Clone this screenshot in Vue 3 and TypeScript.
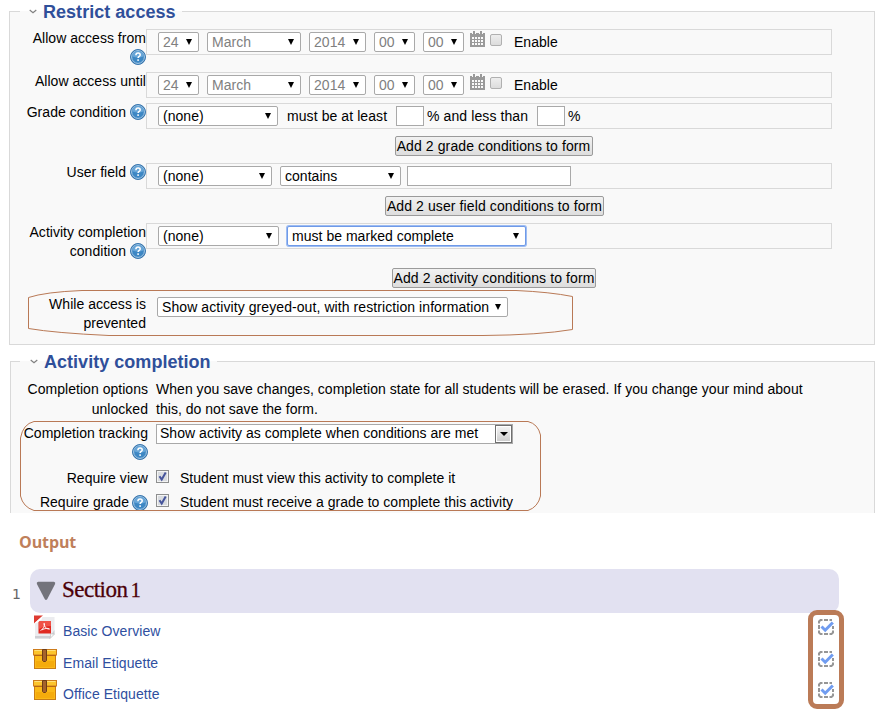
<script setup lang="ts">
import { defineComponent, h } from 'vue'

interface DateRow { label: string; help: boolean; cls: string }
interface Activity { name: string; kind: 'pdf' | 'package' }

const dateRows: DateRow[] = [
  { label: 'Allow access from', help: true, cls: 'from' },
  { label: 'Allow access until', help: false, cls: 'until' },
]
const dateParts = [
  { value: '24', cls: 'w41' },
  { value: 'March', cls: 'w94' },
  { value: '2014', cls: 'w57' },
  { value: '00', cls: 'w41' },
  { value: '00', cls: 'w41' },
]
const activities: Activity[] = [
  { name: 'Basic Overview', kind: 'pdf' },
  { name: 'Email Etiquette', kind: 'package' },
  { name: 'Office Etiquette', kind: 'package' },
]

const HelpIcon = defineComponent({
  render: () =>
    h('svg', { width: 16, height: 16, viewBox: '0 0 16 16' }, [
      h('circle', { cx: 8, cy: 8, r: 7.5, fill: '#2e6ca4', stroke: '#3a78b0', 'stroke-width': 1 }),
      h('circle', { cx: 8, cy: 8, r: 6.4, fill: '#3d87c4', stroke: '#a9cdea', 'stroke-width': 1 }),
      h('path', { d: 'M2.5 7.5a5.5 5.5 0 0 1 11 0q-5.5 2-11 0z', fill: '#68a6d8' }),
      h('path', { d: 'M5.9 6.3c0-1.5 .9-2.200 2.200-2.200s2.100.7 2.100 1.800c0 1.500-2.100 1.600-2.100 3.200', fill: 'none', stroke: '#fff', 'stroke-width': 1.5 }),
      h('rect', { x: 7.3, y: 10.3, width: 1.600, height: 1.600, fill: '#fff' }),
    ]),
})
</script>

<template>
  <main class="page">
    <fieldset class="panel restrict">
      <legend>
        <svg class="chev" width="8" height="5" viewBox="0 0 8 5"><path d="M.7 1L4 3.7 7.3 1" /></svg>
        <span>Restrict access</span>
      </legend>

      <div v-for="row in dateRows" :key="row.label" class="row" :class="row.cls">
        <div class="label"><span>{{ row.label }}</span><HelpIcon v-if="row.help" class="help" /></div>
        <div class="box">
          <span v-for="(part, i) in dateParts" :key="i" class="select dim" :class="part.cls">{{ part.value }}<i class="arrow" /></span>
          <svg class="calendar" width="15" height="16" viewBox="0 0 15 16" shape-rendering="crispEdges">
            <path fill="#999" d="M0 2h15v14H0z" />
            <path fill="#f9f9f9" d="M2 0h1v3H2zM5 0h1v3H5zM9 0h1v3H9zM12 0h1v3h-1z" />
            <path fill="#999" d="M3 0h2v3H3zM10 0h2v3h-2z" />
            <path fill="#f9f9f9" d="M2 6h2v2H2zM5 6h2v2H5zM8 6h2v2H8zM11 6h2v2h-2zM2 9h2v2H2zM5 9h2v2H5zM8 9h2v2H8zM11 9h2v2h-2zM2 12h2v2H2zM5 12h2v2H5zM8 12h2v2H8zM11 12h2v2h-2z" />
          </svg>
          <span class="tick-off" />
          <span class="enable">Enable</span>
        </div>
      </div>

      <div class="row cond">
        <div class="label"><span>Grade condition</span><HelpIcon class="help" /></div>
        <div class="box">
          <span class="select w120">(none)<i class="arrow" /></span>
          <span class="t-least">must be at least</span>
          <span class="input w28" />
          <span class="t-less">% and less than</span>
          <span class="input w28" />
          <span class="t-pct">%</span>
        </div>
      </div>
      <div class="action first"><button type="button" class="b198">Add 2 grade conditions to form</button></div>

      <div class="row cond">
        <div class="label"><span>User field</span><HelpIcon class="help" /></div>
        <div class="box">
          <span class="select w114">(none)<i class="arrow" /></span>
          <span class="select w121">contains<i class="arrow" /></span>
          <span class="input w164" />
        </div>
      </div>
      <div class="action"><button type="button" class="b219">Add 2 user field conditions to form</button></div>

      <div class="row completion">
        <div class="label"><span>Activity completion</span><span>condition <HelpIcon class="help inline" /></span></div>
        <div class="box">
          <span class="select w121">(none)<i class="arrow" /></span>
          <span class="select w239 focus">must be marked complete<i class="arrow" /></span>
        </div>
      </div>
      <div class="action last"><button type="button" class="b204">Add 2 activity conditions to form</button></div>

      <div class="row prevented">
        <div class="label"><span>While access is</span><span>prevented</span></div>
        <span class="select w351">Show activity greyed-out, with restriction information<i class="arrow" /></span>
      </div>
    </fieldset>

    <fieldset class="panel tracking">
      <legend>
        <svg class="chev" width="8" height="5" viewBox="0 0 8 5"><path d="M.7 1L4 3.7 7.3 1" /></svg>
        <span>Activity completion</span>
      </legend>
      <div class="row2 unlocked">
        <div class="label2">Completion options<br>unlocked</div>
        <p>When you save changes, completion state for all students will be erased. If you change your mind about<br>this, do not save the form.</p>
      </div>
      <div class="row2 track">
        <div class="label2"><span>Completion tracking</span><HelpIcon class="help" /></div>
        <span class="select flat">Show activity as complete when conditions are met<b class="drop"><i /></b></span>
      </div>
      <div class="row2 check">
        <div class="label2">Require view</div>
        <svg class="tick-on" width="13" height="13" viewBox="0 0 13 13"><rect x=".5" y=".5" width="12" height="12" fill="#f4f4f4" stroke="#8e8f8f" /><rect x="2" y="2" width="9" height="9" fill="#d9dce0" /><path d="M3.500 6.200l2.200 3.300 4-7" /></svg>
        <span>Student must view this activity to complete it</span>
      </div>
      <div class="row2 check">
        <div class="label2 with-help"><span>Require grade</span><HelpIcon class="help" /></div>
        <svg class="tick-on" width="13" height="13" viewBox="0 0 13 13"><rect x=".5" y=".5" width="12" height="12" fill="#f4f4f4" stroke="#8e8f8f" /><rect x="2" y="2" width="9" height="9" fill="#d9dce0" /><path d="M3.500 6.200l2.200 3.300 4-7" /></svg>
        <span>Student must receive a grade to complete this activity</span>
      </div>
    </fieldset>

    <section class="output">
      <h2>Output</h2>
      <div class="section-head">
        <span class="num">1</span>
        <div class="bar">
          <svg width="20" height="20" viewBox="0 0 20 20"><path d="M2.200 .8h15.600q2 .2 1.300 2.200L11.300 18q-1.300 2-2.600 0L.9 3Q.2 1 2.200 .8z" fill="#73737b" /></svg>
          <h3>Section <small>1</small></h3>
        </div>
      </div>
      <ul>
        <li v-for="a in activities" :key="a.name">
          <svg v-if="a.kind === 'pdf'" class="ico" width="24" height="24" viewBox="0 0 24 24">
            <path d="M2 2h19.500v17L17 23.500H2z" fill="#ececef" />
            <path d="M2 21v2.500h15L21.500 19v-4L17 21z" fill="#cfcfd4" />
            <path d="M17 23.500q1-3 .3-4.800 2 .6 4.200.3z" fill="#fafafa" stroke="#bbb" stroke-width=".6" />
            <rect x="5.500" y="6" width="12.500" height="12.500" fill="#e02a22" />
            <path d="M6 6h12v5Q11 11 6 14z" fill="#f05247" />
            <path d="M7.500 15.500c3-1.300 4.500-5 4-7-.5-1-1 .2-.3 1.800 1 2.500 3 4 5.300 3.700-1.500-1.300-5-.5-7.500.8" fill="none" stroke="#fff" stroke-width=".9" />
            <path d="M1 .5h9L1 8.500z" fill="#de3b31" />
            <path d="M1 8.500L10 .5l-1.500 4L4 8z" fill="#fff" />
          </svg>
          <svg v-else class="ico pack" width="24" height="21" viewBox="0 0 24 21">
            <rect x="1.500" y="4.500" width="21" height="15" fill="#fbb917" stroke="#c77c16" />
            <rect x="3" y="12" width="18" height="6" fill="#f5ab0c" />
            <rect x=".5" y=".5" width="23" height="5.500" fill="#fcc42c" stroke="#cd7c1c" />
            <path d="M1 6.500h22" stroke="#b96613" />
            <path d="M1.500 1.500h21" stroke="#ffe07a" />
            <path d="M9.500.5h4v11l-1 1h-2l-1-1z" fill="#a5622c" stroke="#6f3d16" />
          </svg>
          <a>{{ a.name }}</a>
          <svg class="done" width="16" height="16" viewBox="0 0 16 16">
            <path d="M1 4.500V2.500L2.500 1H4.500M6 1h4M11.500 1h2.500M15 11.500v2L13.500 15h-2M10 15H6M4.500 15H2.500L1 13.500v-2M1 6v4M15 7v3" fill="none" stroke="#969696" stroke-width="2" />
            <path d="M3.500 7.500L7.200 11.200 14.800 3.500" fill="none" stroke="#709cf0" stroke-width="3" />
          </svg>
        </li>
      </ul>
    </section>

    <svg class="marks" width="885" height="720" viewBox="0 0 885 720">
      <path d="M28.500 297.500Q45 292 82 290.500H516Q550 292 572.500 296.500V329.500Q540 335 483 335.500H109Q55 333 28.500 328.500z" />
      <path d="M34 421.500H528Q538 424 540.500 435V496Q538 507 528 510.500H34Q23 507 20.500 496V438Q23 424 34 421.500z" />
      <rect class="thick" x="810.500" y="612.500" width="31" height="94" rx="6.500" />
    </svg>
  </main>
</template>

<style>
body { margin: 0; background: #fff; }
</style>

<style scoped>
.page { position: relative; width: 885px; height: 720px; overflow: hidden; font: 14px/19px Arial, "Liberation Sans", sans-serif; letter-spacing: .03px; color: #000; background: #fff; }
.panel { box-sizing: border-box; margin: 0; border: 1px solid #d9d9d9; background: #f9f9f9; min-width: 0; }
.restrict { width: 866px; height: 345px; margin-left: 9px; padding: 6px 0 0; }
.tracking { width: 865px; height: 163px; margin: 5px 0 0 10px; padding: 6px 0 0; border-bottom: 0; }
legend { display: flex; align-items: center; box-sizing: border-box; height: 23px; margin-left: 10px; padding: 0 6px 0 9px; font-size: 18px; font-weight: bold; line-height: 23px; color: #2f4f9a; white-space: nowrap; }
legend span { padding-top: 2px; }
.tracking legend { margin-left: 9px; padding-left: 10px; }
.chev { margin-right: 6px; }
.chev path { fill: none; stroke: #808080; stroke-width: 1.200; }
.row { display: flex; align-items: flex-start; white-space: nowrap; }
.from { height: 43px; }
.until { height: 31px; }
.cond { height: 33px; }
.completion { height: 45px; }
.label { width: 136px; flex: none; display: flex; flex-direction: column; align-items: flex-end; }
.cond .label { flex-direction: row; justify-content: flex-end; align-items: flex-start; gap: 4px; }
.help { display: block; flex: none; margin-top: 1px; }
.inline { display: inline-block; margin-top: 0; vertical-align: -3px; }
.box { box-sizing: border-box; width: 686px; height: 26px; border: 1px solid #d9d9d9; display: flex; align-items: flex-start; padding: 2px 0 0 11px; line-height: 20px; }
.select { box-sizing: border-box; flex: none; height: 20px; display: flex; align-items: center; justify-content: space-between; border: 1px solid #a9a9a9; border-radius: 2px; background: #fff; padding: 0 6px 0 4px; line-height: 18px; white-space: nowrap; }
.select + .select { margin-left: 8px; }
.dim { color: #808080; }
.arrow { width: 0; height: 0; border: 3.500px solid transparent; border-top: 6px solid #000; border-bottom: 0; }
.focus { border-color: #6f9ae8; box-shadow: 0 0 0 1px #9dbcf2; }
.w41 { width: 41px; }
.w57 { width: 57px; }
.w94 { width: 94px; }
.w114 { width: 114px; }
.w120 { width: 120px; }
.w121 { width: 121px; }
.w239 { width: 239px; }
.w351 { width: 351px; margin-left: 11px; letter-spacing: .08px; }
.calendar { margin: -1px 0 0 6px; }
.tick-off { box-sizing: border-box; width: 12px; height: 12px; margin: 2px 12px 0 5px; border: 1px solid #b0b0b0; border-radius: 2px; background: linear-gradient(#eee, #dcdcdc); }
.input { box-sizing: border-box; height: 20px; border: 1px solid #a9a9a9; background: #fff; }
.w28 { width: 28px; }
.w164 { width: 164px; margin-left: 6px; }
.t-least { width: 109px; margin-left: 9px; letter-spacing: .08px; }
.t-less { width: 110px; margin-left: 3px; letter-spacing: .1px; }
.t-pct { margin-left: 3px; }
.action { height: 27px; padding-left: 105px; }
.action.first { padding-left: 103px; }
.action.last { height: 29px; padding-left: 104px; }
button { display: block; box-sizing: border-box; height: 20px; margin: 0 auto; padding: 0; border: 1px solid #9b9b9b; border-radius: 2px; background: linear-gradient(#f2f2f2, #ddd); font: inherit; letter-spacing: .1px; line-height: 18px; color: #000; white-space: nowrap; }
.b198 { width: 198px; }
.b219 { width: 219px; }
.b204 { width: 204px; }
.prevented .label { margin-top: -2px; }
.row2 { display: flex; align-items: flex-start; white-space: nowrap; }
.label2 { width: 137px; flex: none; margin-right: 8px; text-align: right; line-height: 20px; }
.row2 p { margin: 0; line-height: 20px; }
.unlocked { height: 44px; }
.track { height: 45px; }
.track .label2 { display: flex; flex-direction: column; align-items: flex-end; }
.check { height: 24px; line-height: 20px; }
.with-help { display: flex; justify-content: flex-end; align-items: flex-start; gap: 3px; }
.with-help .help { margin: 3px 0 0; }
.flat { width: 357px; height: 20px; margin-top: 1px; border-radius: 0; padding: 0 0 0 3px; line-height: 16px; align-items: flex-start; }
.drop { box-sizing: border-box; width: 17px; height: 18px; border: 1px solid #707070; box-shadow: inset 0 0 0 1px #fff; background: linear-gradient(#f5f5f5, #ccc); display: flex; align-items: center; justify-content: center; }
.drop i { width: 0; height: 0; border: 4px solid transparent; border-top: 4px solid #000; border-bottom: 0; }
.tick-on { margin: 2px 11px 0 0; }
.tick-on path { fill: none; stroke: #46549b; stroke-width: 2; }
.output h2 { margin: 17px 0 0 19px; font: bold 16px/24px "Open Sans", sans-serif; letter-spacing: -.1px; color: #bf7f5b; }
.section-head { display: flex; margin-top: 15px; height: 44px; }
.num { width: 30px; flex: none; box-sizing: border-box; padding: 15px 0 0 12px; font: 14px/20px "DejaVu Sans", sans-serif; color: #666; }
.bar { box-sizing: border-box; width: 809px; height: 44px; border-radius: 10px; background: #e2e1f1; display: flex; align-items: flex-start; padding: 12px 0 0 6px; }
.bar h3 { margin: -4px 0 0 6px; font: normal 23px/26px Georgia, "Liberation Serif", serif; letter-spacing: -.5px; word-spacing: -2px; color: #4c0008; -webkit-text-stroke: .3px #4c0008; }
.bar small { font-size: 20px; }
ul { margin: 0; padding: 2px 0 0 33px; list-style: none; }
li { display: flex; align-items: flex-start; width: 801px; height: 31.500px; }
.ico { margin-right: 6px; }
.pack { margin-top: 2px; }
li a { margin-top: 6px; line-height: 20px; letter-spacing: .07px; color: #2f4f9f; }
.done { margin-left: auto; margin-top: 4px; }
.marks { position: absolute; left: 0; top: 0; pointer-events: none; }
.marks path { fill: none; stroke: #b97956; stroke-width: 1; }
.thick { fill: none; stroke: #bb7b57; stroke-width: 5; }
</style>
